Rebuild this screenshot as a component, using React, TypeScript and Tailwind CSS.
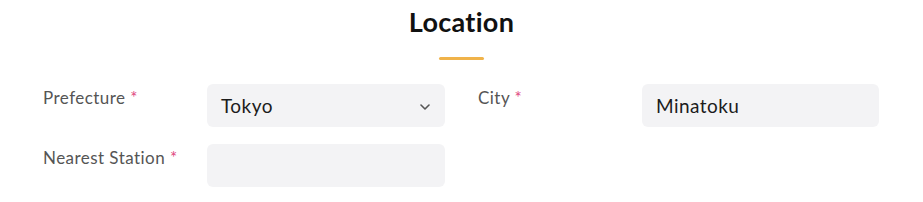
import React from 'react';

const Label: React.FC<{ text: string }> = ({ text }) => (
  <div className="w-[164px] shrink-0 pt-[2px] text-[17px] leading-[24px] tracking-[0.45px] text-[#555555]">
    {text} <span className="text-[#e0487f]">*</span>
  </div>
);

const Field: React.FC<{ value?: string; select?: boolean; w: string }> = ({ value, select, w }) => (
  <div className={`${w} h-[43px] shrink-0 rounded-[6px] bg-[#f3f3f5] pl-[14px] pr-[14px] pt-[2px] flex items-center justify-between`}>
    <span className="text-[19px] tracking-[0.45px] text-[#1c1c1c]">{value}</span>
    {select && (
      <svg width="10" height="6" viewBox="0 0 10 6" className="mr-[1px]">
        <path d="M1 1l4 4 4-4" fill="none" stroke="#555" strokeWidth="1.6" strokeLinecap="round" strokeLinejoin="round" />
      </svg>
    )}
  </div>
);

export default function App() {
  return (
    <div className="w-[923px] h-[202px] bg-white font-['Lato','Noto_Sans',sans-serif] overflow-hidden">
      <div className="flex flex-col items-center pt-[5px]">
        <h2 className="text-[27px] leading-[33px] font-bold tracking-[0.3px] text-[#111111]">Location</h2>
        <div className="mt-[19px] w-[45px] h-[3px] rounded-full bg-[#f0b34a]" />
      </div>

      <div className="px-[43px] mt-[24px] flex flex-col gap-[17px]">
        <div className="flex">
          <Label text="Prefecture" />
          <Field value="Tokyo" select w="w-[238px]" />
          <div className="ml-[33px] flex">
            <Label text="City" />
            <Field value="Minatoku" w="w-[237px]" />
          </div>
        </div>
        <div className="flex">
          <Label text="Nearest Station" />
          <Field w="w-[238px]" />
        </div>
      </div>
    </div>
  );
}
